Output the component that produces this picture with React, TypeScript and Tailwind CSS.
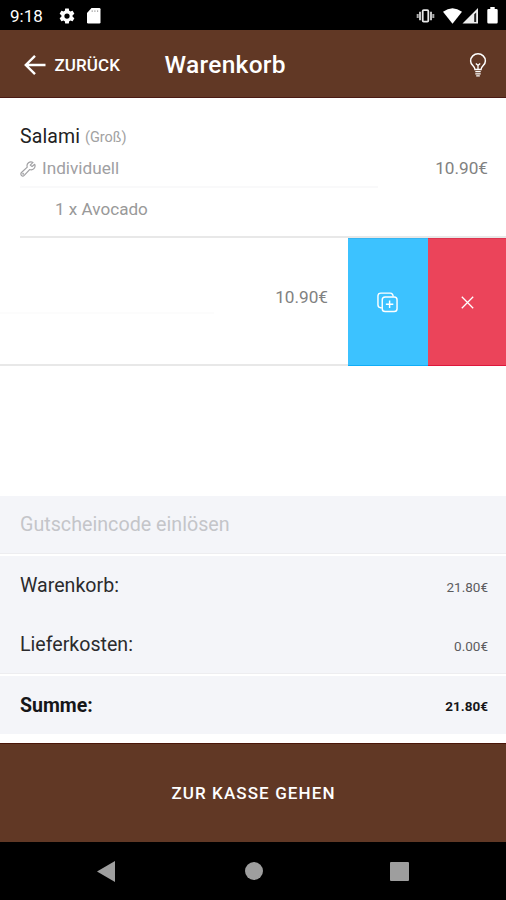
import type { ReactNode } from "react";

function StatusBar() {
  return (
    <div className="flex h-[30px] shrink-0 items-center bg-black pt-[1px] pl-[10px] text-white">
      <span className="w-[48px] text-[17px] leading-5">9:18</span>
      <svg className="h-[18px] w-[18px] shrink-0" viewBox="0 0 24 24" fill="currentColor">
        <path
          fillRule="evenodd"
          d="M19.43 12.98c.04-.32.07-.64.07-.98s-.03-.66-.07-.98l2.11-1.65c.19-.15.24-.42.12-.64l-2-3.46c-.12-.22-.39-.3-.61-.22l-2.49 1c-.52-.4-1.08-.73-1.69-.98l-.38-2.65C14.46 2.18 14.25 2 14 2h-4c-.25 0-.46.18-.49.42l-.38 2.65c-.61.25-1.17.59-1.69.98l-2.49-1c-.23-.09-.49 0-.61.22l-2 3.46c-.13.22-.07.49.12.64l2.11 1.65c-.04.32-.07.65-.07.98s.03.66.07.98l-2.11 1.65c-.19.15-.24.42-.12.64l2 3.46c.12.22.39.3.61.22l2.49-1c.52.4 1.08.73 1.69.98l.38 2.65c.03.24.24.42.49.42h4c.25 0 .46-.18.49-.42l.38-2.65c.61-.25 1.17-.59 1.69-.98l2.49 1c.23.09.49 0 .61-.22l2-3.46c.12-.22.07-.49-.12-.64zM12 15.5A3.5 3.5 0 1 1 12 8.5a3.5 3.5 0 0 1 0 7z"
        />
      </svg>
      <svg className="ml-[11px] h-[16px] w-[14px] shrink-0" viewBox="0 0 14 16">
        <path d="M4.5 0H12.3Q13.5 0 13.5 1.3V14.2Q13.5 15.5 12.3 15.5H1.2Q0 15.5 0 14.2V5Z" fill="#fff" />
        <path d="M5.2 2.2V4M7.9 2.2V4M10.6 2.2V4" stroke="#aaa" strokeWidth="1.1" />
      </svg>
      <span className="flex-1" />
      <svg className="mr-[8px] h-[14px] w-[19px] shrink-0" viewBox="0 0 19 14">
        <rect x="6.7" y="1.2" width="5.6" height="11.4" rx="1" fill="none" stroke="#e8e8e8" strokeWidth="1.8" />
        <path d="M4 2.8V11.2M15 2.8V11.2" stroke="#c4c4c4" strokeWidth="2" />
        <path d="M1.7 5V9M17.3 5V9" stroke="#aaa" strokeWidth="2" />
      </svg>
      <svg className="h-[16px] w-[19px] shrink-0" viewBox="0 0 19 16">
        <path d="M0 3.8Q9.5 -3.2 19 3.8L9.5 15.8Z" fill="#fff" />
      </svg>
      <svg className="mr-[8px] h-[16px] w-[17px] shrink-0" viewBox="0 0 17 16">
        <path d="M0.5 15.5L16 0V15.5Z" fill="#eee" />
        <path d="M12.2 6.3L14.2 4.5V14H12.2Z" fill="#222" />
      </svg>
      <svg className="mr-[8px] h-[17px] w-[11px] shrink-0" viewBox="0 0 11 17">
        <path d="M3.3 0H7.7V2H9.5Q10.7 2 10.7 3.2V15.3Q10.7 16.5 9.5 16.5H1.5Q0.3 16.5 0.3 15.3V3.2Q0.3 2 1.5 2H3.3Z" fill="#fff" />
      </svg>
    </div>
  );
}

function Header() {
  return (
    <header className="flex h-[68px] shrink-0 items-center border-b border-[#4a1a14] bg-[#613825] pt-[2px] pr-[19px] pl-[24px] text-white">
      <svg className="h-[20px] w-[22px] shrink-0" viewBox="0 0 22 20" fill="none" stroke="currentColor" strokeWidth="2.4">
        <path d="M11 0.9L1.8 10L11 19.1M1.8 10H21.5" />
      </svg>
      <span className="ml-[8.5px] w-[110px] text-[17px] leading-6 font-medium tracking-[0.1px]">ZURÜCK</span>
      <h1 className="flex-1 pt-px text-[24.5px] leading-8 font-medium tracking-[0.3px]">Warenkorb</h1>
      <svg className="h-[24px] w-[18px] shrink-0" viewBox="0 0 18 24" fill="none" stroke="currentColor" strokeWidth="1.5">
        <path d="M6 16.5C6 13 1.6 12.5 1.6 8A7.4 7.2 0 0 1 16.4 8C16.4 12.5 12 13 12 16.5Z" />
        <path d="M6.3 18.7H11.7M6.3 20.8H11.7M7.2 22.8H10.8M9 16V11.5M6.8 10.5L9 12.3L11.2 10.5" strokeWidth="1.3" />
      </svg>
    </header>
  );
}

function CartItem() {
  return (
    <section className="flex h-[140px] shrink-0">
      <div className="w-[20px]" />
      <div className="flex flex-1 border-b-2 border-[#e8e8e8] pt-[25px]">
        <div className="w-[358px]">
          <div className="flex h-[28px] items-center">
            <span className="text-[19.5px] tracking-[0.1px] text-[#222]">Salami</span>
            <span className="ml-[5px] pt-px text-[14.5px] text-[#a2a2a2]">(Groß)</span>
          </div>
          <div className="flex h-[37px] items-center border-b-2 border-[#f9f9fa] text-[#a0a0a3]">
            <svg className="mt-[1px] h-[16px] w-[16px]" viewBox="0 0 17 17" fill="none" stroke="currentColor" strokeWidth="1.25" strokeLinejoin="round">
              <path d="M13.8 1.5A4.2 4.2 0 0 0 7.7 6.5L1.6 12.2A2 2 0 0 0 4.5 15.3L10.2 9.1A4.2 4.2 0 0 0 15.6 3.5L12.8 5.8L10.9 4.4Z" />
              <circle cx="3.4" cy="13.6" r="0.4" />
            </svg>
            <span className="ml-[6px] pt-px text-[17.2px]">Individuell</span>
          </div>
          <div className="flex h-[44px] items-center pl-[35px] text-[17.1px] text-[#999]">1 x Avocado</div>
        </div>
        <span className="mt-[33px] mr-[18px] ml-auto text-[17.2px] leading-6 text-[#818181]">10.90€</span>
      </div>
    </section>
  );
}

function SwipedItem() {
  return (
    <section className="flex h-[128px] shrink-0">
      <div className="flex w-[348px] justify-between border-b-2 border-[#e8e8e8]">
        <div className="mt-[74px] h-[2px] w-[214px] bg-[#fcfcfc]" />
        <span className="mt-[47px] mr-[20px] text-[17.2px] leading-6 text-[#818181]">10.90€</span>
      </div>
      <button className="flex w-[80px] items-center justify-center border-y border-t-[#36b5f0] border-b-[#10adf7] bg-[#3cc2ff] text-white">
        <svg className="mr-[2px] h-[21px] w-[21px]" viewBox="0 0 22 22" fill="none" stroke="currentColor" strokeWidth="1.5">
          <rect x="5.5" y="5.2" width="15.5" height="15.3" rx="3" />
          <path d="M5 16.5H3.8A3 3 0 0 1 1 13.7V4A3 3 0 0 1 4 1.2H13.8A3 3 0 0 1 16.8 4.8M13.2 9V16.8M9.3 12.9H17.1" />
        </svg>
      </button>
      <button className="flex w-[78px] items-center justify-center border-y border-t-[#dc3550] border-b-[#de173c] bg-[#eb445a] text-white">
        <svg className="h-[13px] w-[13px]" viewBox="0 0 13 13" fill="none" stroke="currentColor" strokeWidth="1.3">
          <path d="M0.8 0.8L12.2 12.2M12.2 0.8L0.8 12.2" />
        </svg>
      </button>
    </section>
  );
}

function SummaryRow({ label, value }: { label: ReactNode; value: string }) {
  return (
    <div className="flex h-[58.5px] items-center justify-between bg-[#f4f5f9] pr-[18px] pl-[20px]">
      <span className="pt-px text-[19.6px] text-[#2b2b2d]">{label}</span>
      <span className="mt-[4px] text-[13.5px] text-[#5c5c5e]">{value}</span>
    </div>
  );
}

export default function App() {
  return (
    <main className="flex h-[900px] w-[506px] flex-col overflow-hidden bg-white font-[Roboto,sans-serif]">
      <StatusBar />
      <Header />
      <div className="flex h-[398px] shrink-0 flex-col">
        <CartItem />
        <SwipedItem />
      </div>
      <div className="flex h-[58px] shrink-0 items-center border-b border-[#ededf0] bg-[#f4f5f9] pt-[1px] pl-[20px] text-[19.7px] text-[#c4c5c9]">
        Gutscheincode einlösen
      </div>
      <div className="mt-[2px] border-b border-[#ededf0]">
        <SummaryRow label="Warenkorb:" value="21.80€" />
        <SummaryRow label="Lieferkosten:" value="0.00€" />
      </div>
      <div className="mt-[2px] flex h-[58px] shrink-0 items-center justify-between bg-[#f4f5f9] pr-[18px] pl-[20px] font-bold text-[#161618]">
        <span className="pt-[2px] text-[19.5px]">Summe:</span>
        <span className="mt-[3px] text-[13.5px]">21.80€</span>
      </div>
      <button className="mt-[9px] flex h-[99px] shrink-0 items-center justify-center border-t border-[#4a1508] bg-[#613825] pt-[1px] pl-[1px] text-[17px] font-medium tracking-[1.1px] text-white">
        ZUR KASSE GEHEN
      </button>
      <nav className="flex flex-1 items-center bg-black text-[#9e9e9e]">
        <svg className="ml-[97px] h-[21px] w-[18px]" viewBox="0 0 18 21" fill="currentColor">
          <path d="M0 10.5L18 0V21Z" />
        </svg>
        <span className="ml-[130px] h-[18px] w-[18px] rounded-full bg-[#9e9e9e]" />
        <span className="ml-[127px] h-[19px] w-[19px] rounded-[1px] bg-[#9e9e9e]" />
      </nav>
    </main>
  );
}
